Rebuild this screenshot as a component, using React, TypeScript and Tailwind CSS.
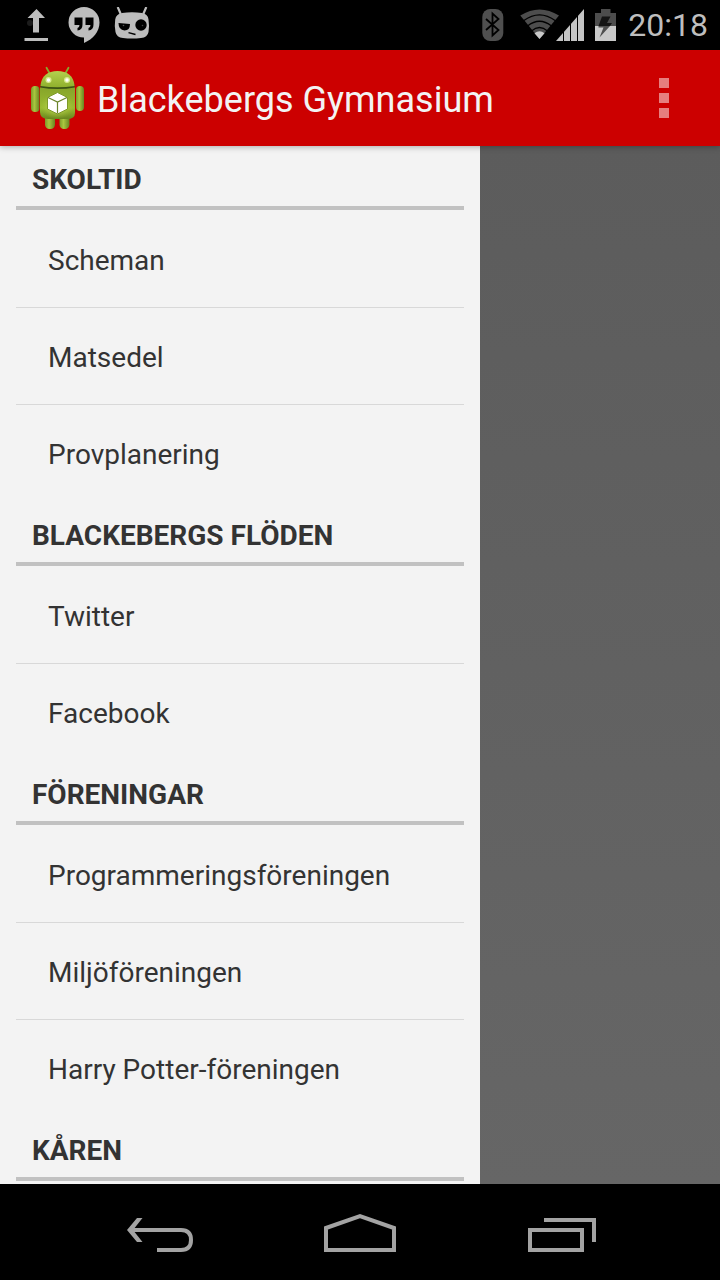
import React from "react";

type Section = { title: string; items: string[] };

const sections: Section[] = [
  { title: "SKOLTID", items: ["Scheman", "Matsedel", "Provplanering"] },
  { title: "BLACKEBERGS FLÖDEN", items: ["Twitter", "Facebook"] },
  {
    title: "FÖRENINGAR",
    items: ["Programmeringsföreningen", "Miljöföreningen", "Harry Potter-föreningen"],
  },
  { title: "KÅREN", items: [] },
];

function UploadIcon() {
  return (
    <svg className="h-9 w-6" viewBox="0 0 24 36" fill="#bdbdbd" aria-hidden="true">
      <circle cx="6" cy="16" r="3" fill="#1c1c1c" />
      <path d="M12.500 2 21 11H15V25.500H9V11H3.500Z" />
      <path d="M.5 31H24V34H.5Z" />
    </svg>
  );
}

function HangoutsIcon() {
  return (
    <svg className="h-9 w-8" viewBox="0 0 32 36" aria-hidden="true">
      <path fill="#bdbdbd" d="M16 0a15.500 15.500 0 0 1 15.500 15.500C31.500 24.500 25 32 16 36V30.500A15.300 15.300 0 0 1 .5 15.500 15.500 15.500 0 0 1 16 0Z" />
      <path fill="#000" d="M6.500 10.500H14.500V17.500Q14.500 23 9.500 23.500V21Q11.500 20.500 11.500 18H6.500ZM17.500 10.500h8V17.500Q25.500 23 20.500 23.500V21Q22.500 20.500 22.500 18H17.500Z" />
    </svg>
  );
}

function CyanIcon() {
  return (
    <svg className="h-9 w-9" viewBox="0 0 36 36" aria-hidden="true">
      <path d="M3.700 0 6.700 7M32.300 0 29.300 7" stroke="#bdbdbd" strokeWidth="2.200" fill="none" />
      <path fill="#bdbdbd" d="M8 6Q18 4.500 28 6 34 7 34.500 12.500 35.500 18.500 34.500 25 33.500 30.500 27 31 18 32.200 9 31 2.500 30.500 1.500 25 .3 18.500 1.200 12.500 2 7 8 6Z" />
      <path fill="#000" d="M4.500 16 16 17Q16 23.500 10.500 23.500 4.500 23 4.500 16Z" />
      <circle cx="27" cy="18" r="5.700" fill="#000" />
      <circle cx="9.500" cy="18.500" r=".8" fill="#555" />
      <circle cx="28.500" cy="18.500" r=".8" fill="#444" />
      <path d="M14.500 25.700 21.500 27.500" stroke="#000" strokeWidth="1.300" />
    </svg>
  );
}

function BluetoothIcon() {
  return (
    <svg className="h-8 w-[22px]" viewBox="0 0 22 32" aria-hidden="true">
      <rect x=".3" y="0" width="21" height="32" rx="8" fill="#4f4f4f" />
      <path d="M4 10 16.500 21 10.500 26.500V4.500L16.500 10 4 21" fill="none" stroke="#000" strokeWidth="1.800" />
    </svg>
  );
}

function WifiIcon() {
  return (
    <svg className="h-8 w-9" viewBox="0 0 36 32" overflow="visible" aria-hidden="true">
      <path fill="#4d4d4d" d="M.3 6.500Q19.500-5.500 39 6.500L19.500 30Z" />
      <g fill="none" stroke="#000" strokeWidth="1.300">
        <path d="M3.500 11.800Q19.500 0 35.500 11.800" />
        <path d="M7.500 17Q19.500 7.500 31.500 17" />
        <path d="M11.500 22Q19.500 15 27.500 22" />
      </g>
      <path fill="#c9c9c9" d="M14.500 24.200Q19.500 20.500 24.500 24.200L19.500 30Z" />
    </svg>
  );
}

function SignalIcon() {
  return (
    <svg className="h-8 w-7" viewBox="0 0 28 32" aria-hidden="true">
      <path fill="#c4c4c4" d="M0 32 28 0V32Z" />
      <path d="M7.500 0V32M14.500 0V32M21.500 0V32" stroke="#000" strokeWidth="1" />
    </svg>
  );
}

function BatteryIcon() {
  return (
    <svg className="h-8 w-[21px]" viewBox="0 0 21 32" aria-hidden="true">
      <path fill="#4d4d4d" d="M0 4H6V0H15.500V4H21V17H0Z" />
      <path fill="#c9c9c9" d="M0 17H21V32H0Z" />
      <path fill="#151515" d="M7 7.500H15.500L12 14H17L15 17H3.500Z" />
      <path fill="#4f4f4f" d="M3.500 17H15L4.500 28.500 8.500 18.500H3.500Z" />
    </svg>
  );
}

function AppIcon() {
  return (
    <svg className="h-16 w-14" viewBox="0 0 56 64" aria-hidden="true">
      <defs>
        <linearGradient id="body" x1="0" y1="0" x2="0" y2="1">
          <stop offset="0" stopColor="#86a42a" />
          <stop offset=".65" stopColor="#9abb30" />
          <stop offset="1" stopColor="#688620" />
        </linearGradient>
        <linearGradient id="head" x1="0" y1="0" x2="0" y2="1">
          <stop offset="0" stopColor="#b4d04e" />
          <stop offset="1" stopColor="#90b02d" />
        </linearGradient>
        <linearGradient id="limb" x1="0" y1="0" x2="1" y2="0">
          <stop offset="0" stopColor="#7d9a28" />
          <stop offset=".4" stopColor="#a9c740" />
          <stop offset="1" stopColor="#688420" />
        </linearGradient>
        <radialGradient id="glow">
          <stop offset="0" stopColor="#dcec7a" />
          <stop offset="1" stopColor="#a5c538" stopOpacity="0" />
        </radialGradient>
      </defs>
      <path d="M18.500 1.800 22 8M40.500 1.800 37 8" stroke="#8aa82c" strokeWidth="1.800" strokeLinecap="round" />
      <rect x="17" y="44" width="10" height="19" rx="4.500" fill="url(#limb)" />
      <rect x="31.500" y="44" width="10" height="19" rx="4.500" fill="url(#limb)" />
      <rect x="3" y="20" width="8.500" height="26" rx="4" fill="url(#limb)" />
      <rect x="48" y="20" width="8" height="25" rx="4" fill="url(#limb)" />
      <path d="M12.500 18H46.500V26H12.500Z" fill="#3c5214" />
      <path d="M12.500 20C13 10 20 5 29.500 5S46 10 46.500 20Q29.500 22.500 12.500 20Z" fill="url(#head)" />
      <path d="M12 21.500Q29.500 24.500 47 21.500V47Q47 53 39 53H20Q12 53 12 46Z" fill="url(#body)" />
      <ellipse cx="29" cy="40" rx="17" ry="13" fill="url(#glow)" />
      <circle cx="20.500" cy="14" r="3" fill="#d8ea90" />
      <circle cx="39" cy="14" r="3" fill="#d8ea90" />
      <circle cx="20.500" cy="14" r="1.700" fill="#fff" />
      <circle cx="39" cy="14" r="1.700" fill="#fff" />
      <path d="M29.500 26.500 39.500 31.500V43L29.500 48 19.500 43V31.500Z" fill="#fff" stroke="#7e9a29" strokeWidth="1" />
      <path d="M20 31.500 29.500 36 39 31.500M29.500 36V47.500" fill="none" stroke="#6b842a" strokeWidth="1.200" />
    </svg>
  );
}

export default function App() {
  return (
    <div className="flex h-screen flex-col overflow-hidden bg-black font-[Roboto,sans-serif]">
      <div className="flex h-[50px] shrink-0 items-center justify-between pr-3 pl-6">
        <div className="flex items-center">
          <UploadIcon />
          <div className="ml-5"><HangoutsIcon /></div>
          <div className="ml-3.5"><CyanIcon /></div>
        </div>
        <div className="flex items-center">
          <BluetoothIcon />
          <div className="ml-4"><WifiIcon /></div>
          <SignalIcon />
          <div className="mr-3 ml-[11px]"><BatteryIcon /></div>
          <time className="text-[32px] leading-10 text-[#bebebe]">20:18</time>
        </div>
      </div>

      <header className="z-10 flex h-24 shrink-0 items-center bg-[#cc0000] pl-7 shadow-[0_1px_6px_rgba(0,0,0,0.3)]">
        <AppIcon />
        <h1 className="ml-[13px] flex-1 pt-1 text-4xl text-[#f3f3f3]">Blackebergs Gymnasium</h1>
        <button type="button" aria-label="Fler alternativ" className="flex h-full w-28 flex-col items-center justify-center gap-[5px]">
          <span className="size-2.5 bg-[#e67f7f]" />
          <span className="size-2.5 bg-[#e67f7f]" />
          <span className="size-2.5 bg-[#e67f7f]" />
        </button>
      </header>

      <main className="flex min-h-0 flex-1 bg-linear-to-b from-[#5c5c5c] to-[#666666]">
        <nav className="w-2/3 overflow-hidden bg-[#f3f3f3] px-4 text-[28px] text-[#333333]">
          {sections.map((section) => (
            <section key={section.title} className="mt-px first:mt-0">
              <h2 className="flex h-16 items-center border-b-4 border-[#c1c1c1] px-4 pt-2 font-bold">
                {section.title}
              </h2>
              <ul>
                {section.items.map((item) => (
                  <li key={item} className="border-t border-[#d8d8d8] first:border-transparent">
                    <a href="#" className="flex h-24 items-center px-8 pt-1">{item}</a>
                  </li>
                ))}
              </ul>
            </section>
          ))}
        </nav>
      </main>

      <footer className="flex h-24 shrink-0 items-center justify-center gap-2.5">
        <button type="button" aria-label="Tillbaka" className="flex h-24 w-48 items-center justify-center">
          <svg className="h-10 w-[72px]" viewBox="0 0 72 40" fill="none" stroke="#a3a3a3" strokeWidth="4" aria-hidden="true">
            <path d="M8 18H59Q69 18 69 28T59 38H35" />
            <path fill="#a3a3a3" stroke="none" d="M15 6H20.500L11 18 20.500 30H15L5 18Z" />
          </svg>
        </button>
        <button type="button" aria-label="Hem" className="flex h-24 w-48 items-center justify-center">
          <svg className="h-10 w-[72px]" viewBox="0 0 72 40" fill="none" stroke="#a3a3a3" strokeWidth="4" aria-hidden="true">
            <path d="M2 16 36 4 70 16V38H2Z" />
          </svg>
        </button>
        <button type="button" aria-label="Senaste appar" className="flex h-24 w-48 items-center justify-center">
          <svg className="h-10 w-[72px]" viewBox="0 0 72 40" fill="none" stroke="#a3a3a3" strokeWidth="4" aria-hidden="true">
            <path d="M4 18H56V38H4ZM18 8H68V30" />
          </svg>
        </button>
      </footer>
    </div>
  );
}
